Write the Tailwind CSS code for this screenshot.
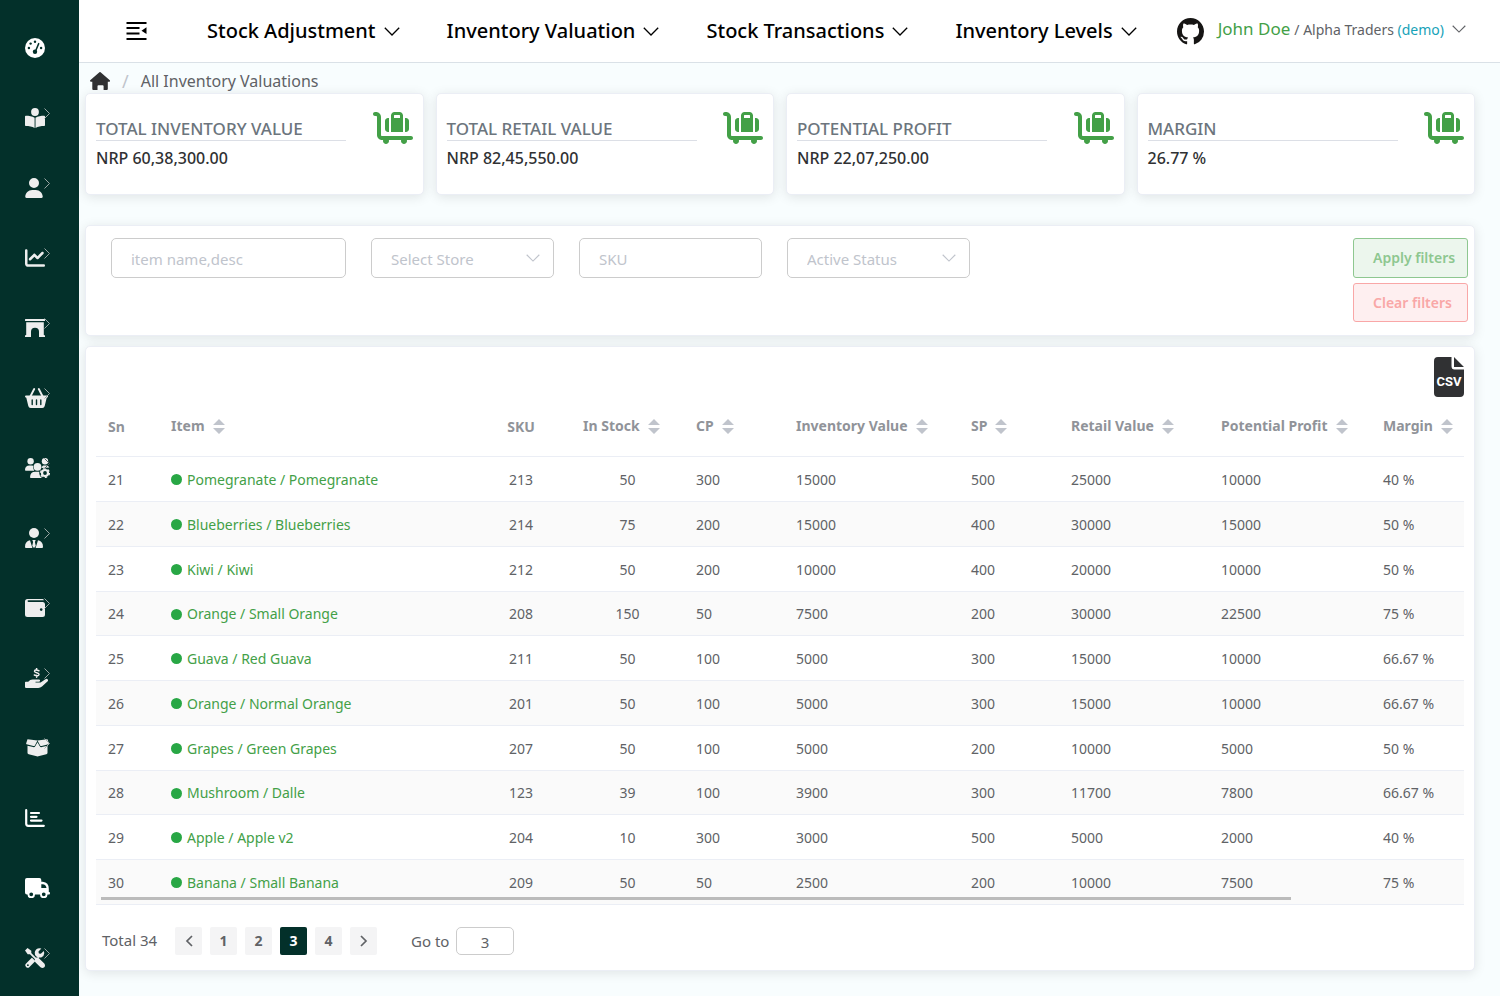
<!DOCTYPE html>
<html lang="en">
<head>
<meta charset="utf-8">
<meta name="viewport" content="width=device-width, initial-scale=1">
<title>All Inventory Valuations</title>
<script src="https://cdn.jsdelivr.net/npm/@tailwindcss/browser@4"></script>
</head>
<body class="flex min-h-screen bg-[#f8fdfe] font-['Noto_Sans',sans-serif] text-sm text-[#606266]">
<svg class="hidden" aria-hidden="true">
  <symbol id="down" viewBox="0 0 16 9"><path d="M.8.8 8 8 15.2.8" fill="none" stroke="currentColor" stroke-width="1.3"/></symbol>
  <symbol id="right" viewBox="0 0 6 11"><path d="M.5.5 5.5 5.5.5 10.5" fill="none" stroke="currentColor"/></symbol>
  <symbol id="sort" viewBox="0 0 12 15"><path d="M6 0 12 6H0zM0 9h12l-6 6z" fill="currentColor"/></symbol>
  <symbol id="luggage" viewBox="0 0 640 512"><path fill="currentColor" d="M0 32C0 14.3 14.3 0 32 0H48c44.2 0 80 35.8 80 80V368c0 8.8 7.2 16 16 16H608c17.7 0 32 14.3 32 32s-14.3 32-32 32H541.3c1.8 5 2.7 10.4 2.7 16c0 26.5-21.5 48-48 48s-48-21.5-48-48c0-5.6 1-11 2.7-16H253.3c1.8 5 2.7 10.4 2.7 16c0 26.5-21.5 48-48 48s-48-21.5-48-48c0-5.6 1-11 2.7-16H144c-44.2 0-80-35.8-80-80V80c0-8.8-7.2-16-16-16H32C14.3 64 0 49.7 0 32zM432 96V56c0-4.4-3.6-8-8-8H344c-4.4 0-8 3.6-8 8V96h96zM288 96V56c0-30.9 25.1-56 56-56h80c30.9 0 56 25.1 56 56V96 320H288V96zM512 320V96h16c26.5 0 48 21.5 48 48V272c0 26.5-21.5 48-48 48H512zM240 96h16V320H240c-26.5 0-48-21.5-48-48V144c0-26.5 21.5-48 48-48z"/></symbol>
</svg>

<nav aria-label="Main" class="flex w-[79px] shrink-0 flex-col gap-[50px] bg-[#03302a] pt-[38px] pl-[25px] text-[#eee]">
  <a href="#" aria-label="Dashboard" class="relative block h-5 w-[25px] text-white"><svg class="h-5 w-5" viewBox="0 0 20 20"><circle cx="10" cy="10" r="10" fill="currentColor"/><g fill="#03302a"><circle cx="3.9" cy="10" r="1.2"/><circle cx="5.6" cy="5.6" r="1.2"/><circle cx="10" cy="3.8" r="1.2"/><circle cx="16.1" cy="10" r="1.2"/><circle cx="10" cy="13.8" r="2.2"/></g><path d="M10.6 13 13.7 5.6" stroke="#03302a" stroke-width="1.5" stroke-linecap="round"/></svg></a>
  <a href="#" aria-label="Catalogue" class="relative block h-5 w-[25px]"><svg class="h-5 w-5" viewBox="0 0 20 20" fill="currentColor"><circle cx="10" cy="4" r="3.9"/><path d="M9.6 9.7v10.2C7 18.6 4 18.1.8 18.1c-.5 0-.8-.3-.8-.8V8.4c0-.4.3-.7.8-.7C4 7.7 7.2 8.2 9.6 9.7zM10.5 9.7v10.2c2.5-1.3 5.5-1.8 8.7-1.8.5 0 .8-.3.8-.8V8.4c0-.4-.3-.7-.8-.7-3.2 0-6.3.5-8.7 2z"/></svg><svg class="absolute top-0 left-[19px] h-[11px] w-1.5 text-[#9aa5a3]"><use href="#right"/></svg></a>
  <a href="#" aria-label="Customers" class="relative block h-5 w-[25px]"><svg class="h-5 w-[18px]" viewBox="0 0 448 512" fill="currentColor"><path d="M224 256A128 128 0 1 0 224 0a128 128 0 1 0 0 256zm-45.7 48C79.8 304 0 383.8 0 482.3C0 498.7 13.3 512 29.7 512H418.3c16.4 0 29.7-13.3 29.7-29.7C448 383.8 368.2 304 269.7 304H178.3z"/></svg><svg class="absolute top-0 left-[19px] h-[11px] w-1.5 text-[#9aa5a3]"><use href="#right"/></svg></a>
  <a href="#" aria-label="Sales" class="relative block h-5 w-[25px]"><svg class="h-5 w-5" viewBox="0 0 512 512" fill="currentColor"><path d="M64 64c0-17.7-14.3-32-32-32S0 46.3 0 64V400c0 44.2 35.8 80 80 80H480c17.7 0 32-14.3 32-32s-14.3-32-32-32H80c-8.8 0-16-7.2-16-16V64zm406.6 86.6c12.5-12.5 12.5-32.8 0-45.3s-32.8-12.5-45.3 0L320 210.7l-57.4-57.4c-12.5-12.5-32.8-12.5-45.3 0l-112 112c-12.5 12.5-12.5 32.8 0 45.3s32.8 12.5 45.3 0L240 221.3l57.4 57.4c12.5 12.5 32.8 12.5 45.3 0l128-128z"/></svg><svg class="absolute top-0 left-[19px] h-[11px] w-1.5 text-[#9aa5a3]"><use href="#right"/></svg></a>
  <a href="#" aria-label="Stores" class="relative block h-5 w-[25px]"><svg class="h-5 w-5" viewBox="0 0 20 20" fill="currentColor"><path d="M.6 1h18.800q.6 0 .6.6v.9q0 .6-.6.6H.6Q0 3.100 0 2.500v-.9Q0 1 .6 1zM1.200 4.300h17.600v12.800H19q1 0 1 .8v1.100h-6v-5.200a4 4 0 0 0-8 0V19H0v-1.100q0-.8 1-.8h.2z"/></svg><svg class="absolute top-0 left-[19px] h-[11px] w-1.5 text-[#9aa5a3]"><use href="#right"/></svg></a>
  <a href="#" aria-label="Purchases" class="relative block h-5 w-[25px]"><svg class="h-5 w-[23px]" viewBox="0 0 23 20"><path d="M9.2 1 5.6 8M13.8 1l3.600 7" stroke="currentColor" stroke-width="1.9" stroke-linecap="round"/><path fill="currentColor" d="M1 7.500h21q1 0 1 1.100t-1.300 1.200L19.700 18q-.4 2-2.400 2H5.700q-2 0-2.400-2L1.300 9.800Q0 9.700 0 8.600T1 7.500z"/><path d="M7.200 12v4.500M11.500 12v4.500M15.800 12v4.500" stroke="#03302a" stroke-width="1.4" stroke-linecap="round"/></svg><svg class="absolute top-0 left-[19px] h-[11px] w-1.5 text-[#9aa5a3]"><use href="#right"/></svg></a>
  <a href="#" aria-label="Staff" class="relative block h-5 w-[25px]"><svg class="h-5 w-[25px]" viewBox="0 0 25 20" fill="currentColor"><circle cx="5.6" cy="3.2" r="3.2"/><circle cx="20" cy="3.2" r="3.2"/><path d="M0 12q0-4.600 4.500-4.600h2q1 0 1.700.4-.6 2.700 1 4.900H.8Q0 12.700 0 12z"/><circle cx="12.5" cy="8.8" r="3.9"/><path d="M5 19.200Q5.300 13.800 10.300 13.800H14.300q-.5 3.700 2.700 6.200H6q-1 0-1-.8z"/><circle cx="20" cy="15" r="3" fill="none" stroke="currentColor" stroke-width="2.2"/><circle cx="20" cy="15" r="4.3" fill="none" stroke="currentColor" stroke-width="1.500" stroke-dasharray="2.250"/><path d="M16.500 9.900q.3-1.800 1.800-2.500h3.500q1.800.3 2.600 2.200z"/></svg><svg class="absolute top-0 left-[19px] h-[11px] w-1.5 text-[#52615f]"><use href="#right"/></svg></a>
  <a href="#" aria-label="Managers" class="relative block h-5 w-[25px]"><svg class="h-5 w-[18px]" viewBox="0 0 18 20" fill="currentColor"><circle cx="9" cy="5" r="5"/><path d="M5 12.300 7.400 19.900H1q-1 0-1-1Q0 13.300 5 12.300zM13 12.300q5 1 5 6.600 0 1-1 1h-6.400zM7.300 12h3.400l-.8 2 .9 4-1.800 2-1.800-2 .9-4z"/></svg><svg class="absolute top-0 left-[19px] h-[11px] w-1.5 text-[#9aa5a3]"><use href="#right"/></svg></a>
  <a href="#" aria-label="Wallet" class="relative block h-5 w-[25px]"><svg class="h-5 w-5" viewBox="0 0 20 20"><path fill="currentColor" d="M2.500 1H17.500q1.300 0 1.300 1.200H3.400Q2.500 2.200 2.500 3t.9.9H18q2 .3 2 2.300v10.300Q20 19 17.500 19h-15Q0 19 0 16.500v-13Q0 1 2.500 1z"/><circle cx="16.2" cy="11.6" r="1.3" fill="#03302a"/></svg><svg class="absolute top-0 left-[19px] h-[11px] w-1.5 text-[#9aa5a3]"><use href="#right"/></svg></a>
  <a href="#" aria-label="Payments" class="relative block h-5 w-[25px]"><svg class="h-5 w-[23px]" viewBox="0 0 23 20"><path d="M13.900 2.700q-4.200-1.600-4.400.5 0 1 2.200 1.500 2.400.5 2.300 1.700-.3 2.300-4.700.6M11.600.4v1.800M11.600 7.400v1.900" fill="none" stroke="currentColor" stroke-width="1.500" stroke-linecap="round"/><path fill="currentColor" d="M.8 13.700h2.400l2-1.600q1-.7 2.500-.7h6.100q1.400 0 1.300 1.200t-1.300 1.200H10.500v.8h5.100l4.800-3.400q1.400-.8 2.300.2t-.3 2.200L17 18.600q-1.700 1.300-3.700 1.300H.8q-.8 0-.8-.8v-4.600q0-.8.8-.8z"/></svg><svg class="absolute top-0 left-[19px] h-[11px] w-1.5 text-[#9aa5a3]"><use href="#right"/></svg></a>
  <a href="#" aria-label="Products" class="relative block h-5 w-[25px]"><svg class="h-5 w-[25px]" viewBox="0 0 25 20" fill="currentColor"><path d="M2.500 1.300 12.500 2.500 9.900 7.400q-.6.9-1.500.6L1.500 6.200q-.6-.3-.3-1zM22.500 1.300l-10 1.200 2.600 4.900q.6.9 1.500.6l6.900-1.800q.6-.3.3-1z"/><path d="M12.500 4.300 14.600 8q.8 1.500 2.300 1.100L22.500 7.700v7q0 1.200-1.200 1.600l-8 2q-.8.2-1.600 0l-8-2q-1.200-.3-1.200-1.600v-7l5.600 1.400q1.500.4 2.300-1.100z"/></svg><svg class="absolute top-0 left-[19px] h-[11px] w-1.5 text-[#aab0ae]"><use href="#right"/></svg></a>
  <a href="#" aria-label="Reports" class="relative block h-5 w-[25px] text-white"><svg class="h-5 w-5" viewBox="0 0 20 20" fill="none" stroke="currentColor" stroke-width="2.200" stroke-linecap="round"><path d="M1.200 2.200v13.600q0 2 2 2h15.600M6 5h8M6 8.800h5.500M6 12.600h10.500"/></svg></a>
  <a href="#" aria-label="Deliveries" class="relative block h-5 w-[25px] text-white"><svg class="h-5 w-[25px]" viewBox="0 0 25 20" fill="currentColor"><path fill-rule="evenodd" d="M1.900 0h12.500q1.900 0 1.900 1.900v1.900h1.500q6 .6 6 7v3.300h.3q.9 0 .9 1.200t-.9 1.200h-1.600a3.750 3.750 0 0 1-7.500 0H10a3.750 3.750 0 0 1-7.500 0h-.6Q0 16.500 0 14.400V1.900Q0 0 1.900 0zM16.300 6.200v3.700h5.200q-.5-3.500-4-3.700zM6.250 14.400a1.900 1.900 0 1 0 0 3.800 1.900 1.900 0 1 0 0-3.800zM18.750 14.400a1.900 1.900 0 1 0 0 3.800 1.900 1.900 0 1 0 0-3.800z"/></svg></a>
  <a href="#" aria-label="Settings" class="relative mb-7 block h-5 w-[25px]"><svg class="h-5 w-5" viewBox="0 0 20 20"><path d="M2.800 17.200 9.500 10.500 12.300 7.700" stroke="currentColor" stroke-width="4.800" stroke-linecap="round"/><path fill="currentColor" d="M18.800 2.900 15.800 5.800l-2-.3-.3-1.900 2.900-3Q11.800-.8 10 3.400q-.8 2.900 1.200 4.800t5 1.200q4.200-1.900 2.600-6.500z"/><path d="m4 3.800 8 8" stroke="#03302a" stroke-width="4"/><path d="m3.600 3.600 8 8" stroke="currentColor" stroke-width="1.800"/><path fill="currentColor" d="M0 2.500 2.500 0 6.300 2.700v2L4.700 6.300h-2zM11.300 9.600q1.700-.3 2.600.6l5.400 5.300q1.400 2 0 3.800-1.800 1.400-3.800 0l-4.900-4.900q-1.400-1.300-.8-3z"/><circle cx="2.900" cy="17.200" r=".9" fill="#03302a"/></svg><svg class="absolute top-0 left-[19px] h-[11px] w-1.5 text-[#9aa5a3]"><use href="#right"/></svg></a>
</nav>

<div class="flex min-w-0 flex-1 flex-col">
  <header class="flex h-[63px] items-center border-b border-[#dae1e7] bg-white pr-[34px] pl-[46px]">
    <button aria-label="Collapse menu" class="mr-[59px] text-black"><svg class="h-5 w-[23px]" viewBox="0 0 23 20"><path d="M1.500 2h20M1.500 7h13M1.500 12.500h13M1.500 18h20" stroke="currentColor" stroke-width="1.800"/><path d="m16.500 9.700 5-3.400v6.800z" fill="currentColor"/></svg></button>
    <div class="flex flex-1 items-center justify-between pr-10 text-xl font-medium whitespace-nowrap text-black">
      <button class="flex items-center gap-2">Stock Adjustment<svg class="h-[9px] w-4"><use href="#down"/></svg></button>
      <button class="flex items-center gap-2">Inventory Valuation<svg class="h-[9px] w-4"><use href="#down"/></svg></button>
      <button class="flex items-center gap-2">Stock Transactions<svg class="h-[9px] w-4"><use href="#down"/></svg></button>
      <button class="flex items-center gap-2">Inventory Levels<svg class="h-[9px] w-4"><use href="#down"/></svg></button>
    </div>
    <a href="#" aria-label="GitHub" class="mr-3.5 text-[#161514]"><svg class="size-[27px]" viewBox="0 0 16 16" fill="currentColor"><path d="M8 0C3.580 0 0 3.580 0 8c0 3.540 2.290 6.530 5.470 7.590.4.070.55-.17.55-.38 0-.19-.01-.82-.01-1.490-2.010.37-2.530-.49-2.690-.94-.09-.23-.48-.94-.82-1.130-.28-.15-.68-.52-.01-.53.63-.01 1.080.58 1.230.82.72 1.210 1.870.87 2.330.66.07-.52.28-.87.51-1.070-1.780-.2-3.640-.89-3.640-3.950 0-.87.31-1.590.82-2.150-.08-.2-.36-1.020.08-2.120 0 0 .67-.21 2.200.82.64-.18 1.320-.27 2-.27.68 0 1.360.09 2 .27 1.530-1.040 2.200-.82 2.200-.82.44 1.100.16 1.920.08 2.120.51.56.82 1.270.82 2.150 0 3.070-1.870 3.750-3.650 3.950.29.25.54.73.54 1.480 0 1.070-.01 1.930-.01 2.200 0 .21.15.46.55.38A8.013 8.013 0 0016 8c0-4.420-3.580-8-8-8z"/></svg></a>
    <button class="mb-1 flex items-center whitespace-nowrap"><span class="flex items-baseline gap-1"><span class="text-[17px] text-[#43a047]">John Doe</span><span>/ Alpha Traders <span class="text-[#17a2b8]">(demo)</span></span></span><svg class="ml-2 h-2 w-3.5"><use href="#down"/></svg></button>
  </header>

  <main class="pr-[25px] pb-[25px] pl-1.5">
    <nav aria-label="Breadcrumb" class="flex h-[30px] items-center gap-3 pt-[6px] pl-[5px]">
      <a href="#" aria-label="Home" class="text-[#303133]"><svg class="h-[18px] w-5" viewBox="0 0 20 18" fill="currentColor"><path d="M9.400.3q.6-.5 1.200 0l9.200 8q.6.9-.4 1.500h-1.600v7.200q0 1-1 1h-3.200v-3.800q0-.9-.9-.9H8.400q-.9 0-.9.9V18H3.300q-1 0-1-1V9.800H.7Q-.3 9.200.2 8.300z"/></svg></a>
      <span class="text-lg text-[#c0c4cc]">/</span>
      <span class="text-base leading-6">All Inventory Valuations</span>
    </nav>

    <section aria-label="Totals" class="grid grid-cols-4 gap-3 text-[#303133]">
      <article class="flex h-[102px] justify-between rounded-[5px] border border-[#ebeef5] bg-white px-2.5 shadow-[0_2px_12px_rgba(0,0,0,0.1)]">
        <div class="w-[250px] pt-[23px] whitespace-nowrap"><h2 class="border-b border-[#dcdfe6] text-[17px] leading-[23px] font-medium text-[#6c757d]">TOTAL INVENTORY VALUE</h2><p class="pt-[5px] text-base leading-6 font-medium">NRP 60,38,300.00</p></div>
        <svg class="mt-[17px] h-[34px] w-10 text-[#43a047]"><use href="#luggage"/></svg>
      </article>
      <article class="flex h-[102px] justify-between rounded-[5px] border border-[#ebeef5] bg-white px-2.5 shadow-[0_2px_12px_rgba(0,0,0,0.1)]">
        <div class="w-[250px] pt-[23px] whitespace-nowrap"><h2 class="border-b border-[#dcdfe6] text-[17px] leading-[23px] font-medium text-[#6c757d]">TOTAL RETAIL VALUE</h2><p class="pt-[5px] text-base leading-6 font-medium">NRP 82,45,550.00</p></div>
        <svg class="mt-[17px] h-[34px] w-10 text-[#43a047]"><use href="#luggage"/></svg>
      </article>
      <article class="flex h-[102px] justify-between rounded-[5px] border border-[#ebeef5] bg-white px-2.5 shadow-[0_2px_12px_rgba(0,0,0,0.1)]">
        <div class="w-[250px] pt-[23px] whitespace-nowrap"><h2 class="border-b border-[#dcdfe6] text-[17px] leading-[23px] font-medium text-[#6c757d]">POTENTIAL PROFIT</h2><p class="pt-[5px] text-base leading-6 font-medium">NRP 22,07,250.00</p></div>
        <svg class="mt-[17px] h-[34px] w-10 text-[#43a047]"><use href="#luggage"/></svg>
      </article>
      <article class="flex h-[102px] justify-between rounded-[5px] border border-[#ebeef5] bg-white px-2.5 shadow-[0_2px_12px_rgba(0,0,0,0.1)]">
        <div class="w-[250px] pt-[23px] whitespace-nowrap"><h2 class="border-b border-[#dcdfe6] text-[17px] leading-[23px] font-medium text-[#6c757d]">MARGIN</h2><p class="pt-[5px] text-base leading-6 font-medium">26.77 %</p></div>
        <svg class="mt-[17px] h-[34px] w-10 text-[#43a047]"><use href="#luggage"/></svg>
      </article>
    </section>

    <form class="mt-[30px] flex justify-between rounded-[5px] border border-[#ebeef5] bg-white pt-3 pr-1.5 pb-[13px] pl-[25px] shadow-[0_2px_12px_rgba(0,0,0,0.1)]">
      <div class="flex gap-[25px] text-[15px] text-[#c0c4cc]">
        <input type="text" aria-label="Item name or description" placeholder="item name,desc" class="h-10 w-[235px] rounded-[5px] border border-[#ccc] bg-white pt-0.5 pl-[19px] placeholder:text-[#c0c4cc]">
        <div class="relative h-10 w-[183px]"><select aria-label="Store" class="h-10 w-full appearance-none rounded-[5px] border border-[#ccc] bg-white pt-1 pl-[19px]"><option>Select Store</option></select><svg class="pointer-events-none absolute top-4 right-3.5 h-2 w-3.5"><use href="#down"/></svg></div>
        <input type="text" aria-label="SKU" placeholder="SKU" class="h-10 w-[183px] rounded-[5px] border border-[#ccc] bg-white pt-0.5 pl-[19px] placeholder:text-[#c0c4cc]">
        <div class="relative h-10 w-[183px]"><select aria-label="Active status" class="h-10 w-full appearance-none rounded-[5px] border border-[#ccc] bg-white pt-1 pl-[19px]"><option>Active Status</option></select><svg class="pointer-events-none absolute top-4 right-3.5 h-2 w-3.5"><use href="#down"/></svg></div>
      </div>
      <div class="flex w-[115px] flex-col gap-[5px] font-semibold">
        <button type="button" class="h-10 rounded-[3px] border border-[#8ec790] bg-[#ecf6ed] pl-[19px] text-left text-[#8ec790]">Apply filters</button>
        <button type="button" class="h-[39px] rounded-[3px] border border-[#f9a7a7] bg-[#feeff0] pl-[19px] text-left text-[#f9a7a7]">Clear filters</button>
      </div>
    </form>

    <section aria-label="Inventory valuations" class="mt-2.5 rounded-[5px] border border-[#ebeef5] bg-white px-2.5 pt-2.5 pb-[15px] shadow-[0_2px_12px_rgba(0,0,0,0.1)]">
      <div class="flex justify-end"><button aria-label="Export CSV"><svg class="h-10 w-[30px]" viewBox="0 0 30 40"><path fill="#303133" d="M4 0h13.500v9q0 3.500 3 3.500H30V36q0 4-4 4H4q-4 0-4-4V4q0-4 4-4zM20 0l10 10H20z"/><text x="15" y="29" text-anchor="middle" fill="#fff" font-family="Roboto, Liberation Sans, sans-serif" font-weight="700" font-size="13">CSV</text></svg></button></div>
      <div class="relative">
        <table class="w-full table-fixed border-collapse">
          <colgroup><col class="w-[63px]"><col><col class="w-[100px]"><col class="w-[113px]"><col class="w-[100px]"><col class="w-[175px]"><col class="w-[100px]"><col class="w-[150px]"><col class="w-[162px]"><col class="w-[93px]"></colgroup>
          <thead><tr id="head" class="h-[59px] border-b border-[#ebeef5] text-left whitespace-nowrap text-[#909399]"></tr></thead>
          <tbody id="rows"></tbody>
        </table>
        <div class="absolute bottom-[5px] left-[5px] h-[3px] w-[87%] bg-[#bbb]"></div>
      </div>
      <div class="mt-[22px] flex items-center pl-1.5 text-[15px]">
        <span class="w-[73px]">Total 34</span>
        <nav aria-label="Pagination" class="flex gap-2 text-sm font-bold">
          <button aria-label="Previous page" class="flex h-7 w-[27px] items-center justify-center rounded-[2px] bg-[#f4f4f5]"><svg class="h-3 w-2" viewBox="0 0 8 12"><path d="M7 1 2 6l5 5" fill="none" stroke="currentColor" stroke-width="1.700"/></svg></button>
          <button class="h-7 w-[27px] rounded-[2px] bg-[#f4f4f5]">1</button>
          <button class="h-7 w-[27px] rounded-[2px] bg-[#f4f4f5]">2</button>
          <button aria-current="page" class="h-7 w-[27px] rounded-[2px] bg-[#03302a] text-white">3</button>
          <button class="h-7 w-[27px] rounded-[2px] bg-[#f4f4f5]">4</button>
          <button aria-label="Next page" class="flex h-7 w-[27px] items-center justify-center rounded-[2px] bg-[#f4f4f5]"><svg class="h-3 w-2" viewBox="0 0 8 12"><path d="m1 1 5 5-5 5" fill="none" stroke="currentColor" stroke-width="1.700"/></svg></button>
        </nav>
        <label for="page" class="ml-[34px] w-[45px] pt-0.5 whitespace-nowrap">Go to</label>
        <input id="page" type="text" value="3" class="h-7 w-[58px] rounded-[5px] border border-[#ccc] bg-white pt-0.5 text-center">
      </div>
    </section>
  </main>
</div>
<script>
const heads = ['Sn','Item','SKU','In Stock','CP','Inventory Value','SP','Retail Value','Potential Profit','Margin'];
document.getElementById('head').innerHTML = heads.map((h, i) => {
  if (i === 0) return `<th scope="col" class="px-3 pt-0.5 font-bold">${h}</th>`;
  if (i === 2) return `<th scope="col" class="px-3 pt-0.5 text-center font-bold">${h}</th>`;
  return `<th scope="col" class="pl-3 font-bold"><button class="flex items-center gap-2 font-bold">${h}<svg class="h-[15px] w-3 shrink-0 text-[#c0c4cc]"><use href="#sort"/></svg></button></th>`;
}).join('');
const rows = [
  [21,'Pomegranate / Pomegranate',213,50,300,15000,500,25000,10000,'40 %'],
  [22,'Blueberries / Blueberries',214,75,200,15000,400,30000,15000,'50 %'],
  [23,'Kiwi / Kiwi',212,50,200,10000,400,20000,10000,'50 %'],
  [24,'Orange / Small Orange',208,150,50,7500,200,30000,22500,'75 %'],
  [25,'Guava / Red Guava',211,50,100,5000,300,15000,10000,'66.67 %'],
  [26,'Orange / Normal Orange',201,50,100,5000,300,15000,10000,'66.67 %'],
  [27,'Grapes / Green Grapes',207,50,100,5000,200,10000,5000,'50 %'],
  [28,'Mushroom / Dalle',123,39,100,3900,300,11700,7800,'66.67 %'],
  [29,'Apple / Apple v2',204,10,300,3000,500,5000,2000,'40 %'],
  [30,'Banana / Small Banana',209,50,50,2500,200,10000,7500,'75 %']
];
document.getElementById('rows').innerHTML = rows.map(r =>
  `<tr class="h-[45px] border-b border-[#ebeef5] whitespace-nowrap even:bg-[#fafafa] nth-[4n]:h-[44px]">` + r.map((c, i) =>
    i === 1 ? `<td class="px-3 pt-0.5"><a href="#" class="flex items-center gap-[5px] text-[#43a047]"><span class="size-[11px] rounded-full bg-[#28a745]"></span>${c}</a></td>`
    : i === 2 || i === 3 ? `<td class="px-3 pt-0.5 text-center">${c}</td>`
    : `<td class="px-3 pt-0.5">${c}</td>`).join('') + '</tr>').join('');
</script>
</body>
</html>
